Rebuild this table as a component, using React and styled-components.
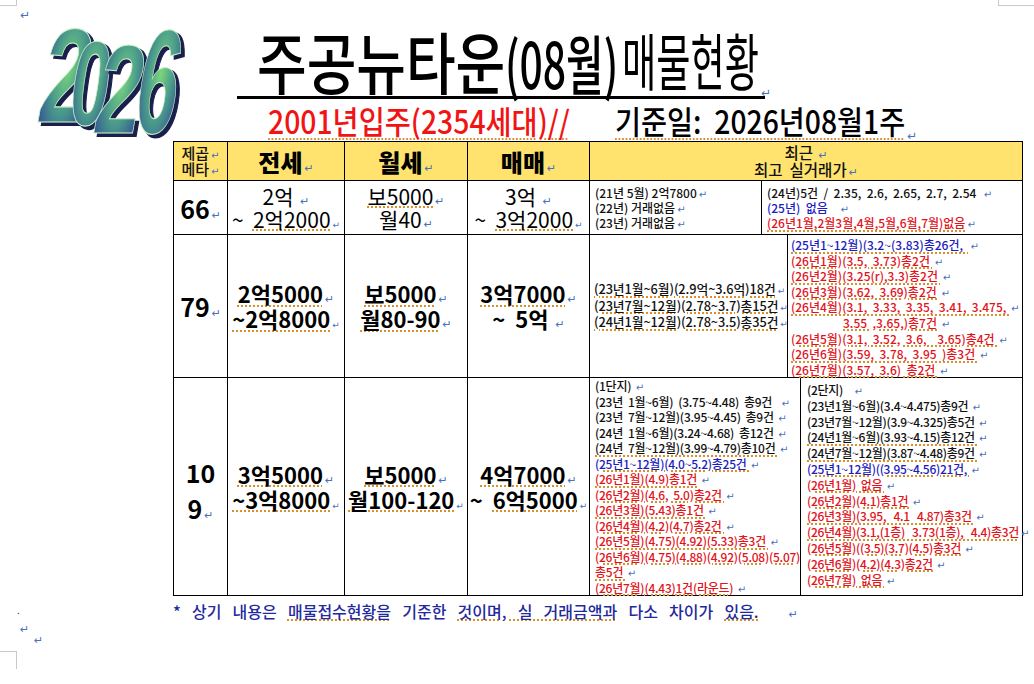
import React, { useRef, useState, useLayoutEffect } from 'react';
import styled, { createGlobalStyle } from 'styled-components';

const GlobalStyle = createGlobalStyle`
  html, body { margin: 0; padding: 0; background: #fff; }
  body { font-family: "Noto Sans CJK KR", "Noto Sans", sans-serif; color: #111; }
  * { box-sizing: border-box; }
`;

const COLORS = { k: '#111', b: '#1c1cbf', r: '#e3121b' };
const DOT = '#d98f2b';

const Page = styled.div`
  position: relative;
  width: 1034px;
  height: 684px;
  overflow: hidden;
  background: #fff;
  display: flex;
  flex-direction: column;
`;

const CropMark = styled.div`
  position: absolute;
  left: ${(p) => p.$x}px;
  top: ${(p) => p.$y}px;
  width: ${(p) => p.$w}px;
  height: ${(p) => p.$h}px;
  border: 0 solid #c9c9c9;
  border-width: ${(p) => p.$bw};
`;

const Mark = styled.span`
  font-family: "DejaVu Sans", sans-serif;
  font-size: ${(p) => p.$s || 11}px;
  line-height: 0;
  font-weight: 400;
  letter-spacing: 0;
  color: #4a70b8;
  margin-left: 2px;
`;

const TopRow = styled.div`
  height: 20px;
  padding: 6px 0 0 18px;
  line-height: 12px;
`;

/* ---------- fit-to-width text (condensed headline fonts) ---------- */
const FitBox = styled.span`
  display: inline-block;
  width: ${(p) => p.$w}px;
  white-space: pre;
  flex-shrink: 0;
  line-height: 1;
`;
const FitInner = styled.span`
  display: inline-block;
  transform-origin: 0 50%;
  ${(p) => p.$u && `text-decoration: underline dotted ${DOT}; text-underline-offset: 4px; text-decoration-thickness: 1.5px;`}
`;

function Fit({ w, u, children, className }) {
  const ref = useRef(null);
  const [s, setS] = useState(1);
  useLayoutEffect(() => {
    const measure = () => {
      const el = ref.current;
      if (!el) return;
      const n = el.offsetWidth;
      if (n) setS(w / n);
    };
    measure();
    if (document.fonts && document.fonts.ready) document.fonts.ready.then(measure);
  }, [w]);
  return (
    <FitBox $w={w} className={className}>
      <FitInner ref={ref} $u={u} style={{ transform: `scaleX(${s})` }}>
        {children}
      </FitInner>
    </FitBox>
  );
}

/* ---------- header ---------- */
const Header = styled.div`
  display: grid;
  grid-template-columns: 237px 1fr;
  height: 121px;
`;

const LogoSvg = styled.svg`
  display: block;
  margin-left: 20px;
  overflow: visible;
`;

const TitleCol = styled.div`
  display: flex;
  flex-direction: column;
`;

const TitleLine = styled.div`
  width: 528px;
  height: 79px;
  border-bottom: 3px solid #000;
  display: flex;
  align-items: flex-end;
  padding: 0 0 3px 20px;
`;

const TitleMain = styled(Fit)`
  font-size: 67px;
  font-weight: 500;
  color: #000;
`;
const TitleParen = styled(Fit)`
  font-size: 64px;
  font-weight: 500;
  color: #000;
`;
const TitleSub = styled(Fit)`
  font-size: 62px;
  font-weight: 400;
  color: #000;
  margin: 0 0 3px 4px;
`;

const SubLine = styled.div`
  height: 42px;
  display: flex;
  align-items: flex-end;
  padding: 0 0 5px 31px;
`;
const SubRed = styled(Fit)`
  font-size: 32px;
  font-weight: 500;
  color: #f01414;
`;
const SubBlack = styled(Fit)`
  font-size: 32px;
  font-weight: 500;
  color: #000;
  margin-left: 45px;
`;

/* ---------- table ---------- */
const Table = styled.div`
  margin-left: 173px;
  align-self: flex-start;
  display: grid;
  grid-template-columns: 54px 117px 123px 122px 433px;
  grid-template-rows: 39px 54px 143px 218px;
  border-top: 1px solid #000;
  border-left: 1px solid #000;
`;

const Cell = styled.div`
  border-right: 1px solid #000;
  border-bottom: 1px solid #000;
  background: ${(p) => (p.$head ? '#ffe36e' : '#fff')};
  display: flex;
  flex-direction: column;
  align-items: center;
  justify-content: center;
  text-align: center;
  white-space: pre;
  overflow: visible;
`;

const HeadSmall = styled.div`
  font-size: 15px;
  line-height: 16px;
  font-weight: 500;
  color: #111;
`;
const HeadBig = styled.div`
  font-size: 24px;
  line-height: 28px;
  font-weight: 900;
  color: #000;
  padding-top: 2px;
`;
const HeadRecent = styled.div`
  font-size: 15.5px;
  line-height: 17px;
  font-weight: 500;
  color: #111;
`;

const SizeNum = styled.div`
  font-size: 25px;
  line-height: ${(p) => p.$lh || 30}px;
  font-weight: 700;
  color: #000;
`;

const ValLine = styled.div`
  font-size: ${(p) => (p.$bold ? 22 : 21)}px;
  line-height: ${(p) => (p.$bold ? 25 : 23)}px;
  font-weight: ${(p) => (p.$bold ? 600 : 400)};
  color: #000;
`;

const Dotted = styled.span`
  text-decoration: underline dotted ${DOT};
  text-decoration-thickness: 1.5px;
  text-underline-offset: 2px;
`;

const SplitCell = styled(Cell)`
  flex-direction: row;
  align-items: stretch;
  justify-content: flex-start;
  text-align: left;
`;

const SubPanel = styled.div`
  ${(p) => (p.$w ? `width: ${p.$w}px; flex-shrink: 0; border-right: 1px solid #000;` : 'flex: 1;')}
  display: flex;
  flex-direction: column;
  justify-content: ${(p) => (p.$center ? 'center' : 'flex-start')};
  padding: ${(p) => p.$pad || '0 0 0 4px'};
  font-size: ${(p) => p.$fs}px;
  font-weight: 500;
  letter-spacing: ${(p) => p.$ls || 0}px;
  white-space: pre;
`;

const TxtLine = styled.div`
  height: ${(p) => p.$lh}px;
  line-height: ${(p) => p.$lh}px;
  color: ${(p) => COLORS[p.$c || 'k']};
  padding-left: ${(p) => p.$indent || 0}px;
`;

function Lines({ items, lh, markSize = 10 }) {
  return items.map((it, i) => (
    <TxtLine key={i} $lh={lh} $c={it.c} $indent={it.i}>
      {it.u ? <Dotted>{it.t}</Dotted> : it.t}
      {it.m !== false && <Mark $s={markSize}>↵</Mark>}
    </TxtLine>
  ));
}

/* ---------- footer ---------- */
const FooterRow = styled.div`
  display: grid;
  grid-template-columns: 173px 1fr;
  height: 21px;
  margin-top: 4px;
  align-items: center;
`;
const Dot = styled.span`
  margin-left: 17px;
  font-size: 10px;
  line-height: 10px;
  color: #333;
  align-self: start;
  padding-top: 5px;
`;
const FootText = styled.div`
  font-size: 16px;
  line-height: 18px;
  font-weight: 500;
  color: #1f2a9e;
  word-spacing: 2px;
  white-space: pre;
`;
const MarkRow = styled.div`
  height: ${(p) => p.$h}px;
  padding-left: ${(p) => p.$x}px;
  line-height: ${(p) => p.$h}px;
`;

/* ---------- data ---------- */
const r66L = [
  { t: '(21년 5월) 2억7800' },
  { t: '(22년) 거래없음' },
  { t: '(23년) 거래없음' },
];
const r66R = [
  { t: '(24년)5건  /  2.35,  2.6,  2.65,  2.7,  2.54  ' },
  { t: '(25년)  없음    ', c: 'b' },
  { t: '(26년1월,2월3월,4월,5월,6월,7월)없음', c: 'r', u: true },
];
const r79L = [
  { t: '(23년1월~6월)(2.9억~3.6억)18건', u: true },
  { t: '(23년7월~12월)(2.78~3.7)총15건', u: true },
  { t: '(24년1월~12월)(2.78~3.5)총35건', u: true },
];
const r79R = [
  { t: '(25년1~12월)(3.2~(3.83)총26건,  ', c: 'b', u: true },
  { t: '(26년1월)(3.5,  3.73)총2건 ', c: 'r', u: true },
  { t: '(26년2월)(3.25(r),3.3)총2건 ', c: 'r', u: true },
  { t: '(26년3월)(3.62,  3.69)총2건 ', c: 'r', u: true },
  { t: '(26년4월)(3.1,  3.33,  3.35,  3.41,  3.475, ', c: 'r', u: true },
  { t: '3.55  ,3.65,)총7건 ', c: 'r', u: true, i: 52 },
  { t: '(26년5월)(3.1,  3.52,  3.6,    3.65)총4건 ', c: 'r', u: true },
  { t: '(26년6월)(3.59,  3.78,  3.95  )총3건 ', c: 'r', u: true },
  { t: '(26년7월)(3.57,  3.6)  총2건 ', c: 'r', u: true },
];
const r109L = [
  { t: '(1단지) ' },
  { t: '(23년  1월~6월)  (3.75~4.48)  총9건   ' },
  { t: '(23년  7월~12월)(3.95~4.45)  총9건 ' },
  { t: '(24년  1월~6월)(3.24~4.68)  총12건 ' },
  { t: '(24년  7월~12월)(3.99~4.79)총10건 ', u: true },
  { t: '(25년1~12월)(4.0~5.2)총25건 ', c: 'b', u: true },
  { t: '(26년1월)(4.9)총1건 ', c: 'r', u: true },
  { t: '(26년2월)(4.6,  5.0)총2건 ', c: 'r', u: true },
  { t: '(26년3월)(5.43)총1건 ', c: 'r', u: true },
  { t: '(26년4월)(4.2)(4.7)총2건 ', c: 'r', u: true },
  { t: '(26년5월)(4.75)(4.92)(5.33)총3건 ', c: 'r', u: true },
  { t: '(26년6월)(4.75)(4.88)(4.92)(5.08)(5.07)', c: 'r', u: true, m: false },
  { t: '총5건 ', c: 'r', u: true },
  { t: '(26년7월)(4.43)1건(라운드) ', c: 'r', u: true },
];
const r109R = [
  { t: '(2단지)    ' },
  { t: '(23년1월~6월)(3.4~4.475)총9건 ' },
  { t: '(23년7월~12월)(3.9~4.325)총5건 ' },
  { t: '(24년1월~6월)(3.93~4.15)총12건 ', u: true },
  { t: '(24년7월~12월)(3.87~4.48)총9건 ', u: true },
  { t: '(25년1~12월)((3.95~4.56)21건, ', c: 'b', u: true },
  { t: '(26년1월)  없음 ', c: 'r', u: true },
  { t: '(26년2월)(4.1)총1건 ', c: 'r', u: true },
  { t: '(26년3월)(3.95,   4.1   4.87)총3건 ', c: 'r', u: true },
  { t: '(26년4월)(3.1,(1층)   3.73(1층),   4.4)총3건', c: 'r', u: true },
  { t: '(26년5월)((3.5)(3.7)(4.5)총3건 ', c: 'r', u: true },
  { t: '(26년6월)(4.2)(4.3)총2건 ', c: 'r', u: true },
  { t: '(26년7월)  없음 ', c: 'r', u: true },
];

/* ---------- logo ---------- */
const DIGITS = [
  { ch: '2', x: 15, y: 102, fs: 134, sx: 0.64, sk: -10 },
  { ch: '0', x: 46, y: 105, fs: 120, sx: 0.58, sk: -8 },
  { ch: '2', x: 71, y: 113, fs: 126, sx: 0.64, sk: -10 },
  { ch: '6', x: 111, y: 113, fs: 148, sx: 0.5, sk: -9 },
];

function Logo() {
  return (
    <LogoSvg width="165" height="120" viewBox="0 0 165 120">
      <defs>
        <radialGradient id="lg" cx="0.5" cy="0.45" r="0.65">
          <stop offset="0" stopColor="#79d67c" />
          <stop offset="0.45" stopColor="#4b9b8b" />
          <stop offset="1" stopColor="#2b3f96" />
        </radialGradient>
      </defs>
      {DIGITS.map((d, i) => (
        <g key={i} fontFamily="'Liberation Sans', Arial, sans-serif" fontWeight="700" fontSize={d.fs}>
          <g transform={`translate(${d.x + 3.5} ${d.y + 2.5}) skewX(${d.sk}) scale(${d.sx} 1)`}>
            <text x="0" y="0" fill="#1a1f4c" stroke="#1a1f4c" strokeWidth="2">{d.ch}</text>
          </g>
          <g transform={`translate(${d.x} ${d.y}) skewX(${d.sk}) scale(${d.sx} 1)`}>
            <text x="0" y="0" fill="url(#lg)" stroke="#c9efc6" strokeWidth="1.1">{d.ch}</text>
          </g>
        </g>
      ))}
    </LogoSvg>
  );
}

export default function App() {
  return (
    <>
      <GlobalStyle />
      <Page>
        <CropMark $x={0} $y={0} $w={17} $h={6} $bw="0 1px 1px 0" />
        <CropMark $x={998} $y={0} $w={36} $h={6} $bw="0 0 1px 1px" />
        <CropMark $x={0} $y={651} $w={17} $h={18} $bw="1px 1px 0 0" />

        <TopRow>
          <Mark $s={12}>↵</Mark>
        </TopRow>

        <Header>
          <Logo />
          <TitleCol>
            <TitleLine>
              <TitleMain w={248}>주공뉴타운</TitleMain>
              <TitleParen w={113}>(08월)</TitleParen>
              <TitleSub w={137}>매물현황</TitleSub>
              <Mark $s={12}>↵</Mark>
            </TitleLine>
            <SubLine>
              <SubRed w={302} u>2001년입주(2354세대)//</SubRed>
              <SubBlack w={290} u>기준일:  2026년08월1주</SubBlack>
              <Mark $s={12}>↵</Mark>
            </SubLine>
          </TitleCol>
        </Header>

        <Table>
          {/* header row */}
          <Cell $head>
            <HeadSmall>제곱<Mark $s={10}>↵</Mark></HeadSmall>
            <HeadSmall>메타<Mark $s={10}>↵</Mark></HeadSmall>
          </Cell>
          <Cell $head><HeadBig>전세<Mark $s={11}>↵</Mark></HeadBig></Cell>
          <Cell $head><HeadBig>월세<Mark $s={11}>↵</Mark></HeadBig></Cell>
          <Cell $head><HeadBig>매매<Mark $s={11}>↵</Mark></HeadBig></Cell>
          <Cell $head>
            <HeadRecent>최근 <Mark $s={11}>↵</Mark></HeadRecent>
            <HeadRecent>최고  실거래가<Mark $s={11}>↵</Mark></HeadRecent>
          </Cell>

          {/* 66 */}
          <Cell><SizeNum>66<Mark $s={11}>↵</Mark></SizeNum></Cell>
          <Cell>
            <ValLine>2억 <Mark>↵</Mark></ValLine>
            <ValLine>~  <Dotted>2억2000</Dotted><Mark $s={9}>↵</Mark></ValLine>
          </Cell>
          <Cell>
            <ValLine><Dotted>보5000</Dotted><Mark>↵</Mark></ValLine>
            <ValLine>월40<Mark>↵</Mark></ValLine>
          </Cell>
          <Cell>
            <ValLine>3억 <Mark>↵</Mark></ValLine>
            <ValLine>~  <Dotted>3억2000</Dotted><Mark $s={9}>↵</Mark></ValLine>
          </Cell>
          <SplitCell>
            <SubPanel $w={172} $fs={12} $pad="4px 0 0 5px">
              <Lines items={r66L} lh={15} />
            </SubPanel>
            <SubPanel $fs={12} $pad="4px 0 0 5px">
              <Lines items={r66R} lh={15} />
            </SubPanel>
          </SplitCell>

          {/* 79 */}
          <Cell><SizeNum>79<Mark $s={11}>↵</Mark></SizeNum></Cell>
          <Cell>
            <ValLine $bold><Dotted>2억5000</Dotted><Mark>↵</Mark></ValLine>
            <ValLine $bold><Dotted>~2억8000</Dotted><Mark $s={9}>↵</Mark></ValLine>
          </Cell>
          <Cell>
            <ValLine $bold><Dotted>보5000</Dotted><Mark>↵</Mark></ValLine>
            <ValLine $bold><Dotted>월80-90</Dotted><Mark>↵</Mark></ValLine>
          </Cell>
          <Cell>
            <ValLine $bold><Dotted>3억7000</Dotted><Mark>↵</Mark></ValLine>
            <ValLine $bold>~  5억 <Mark>↵</Mark></ValLine>
          </Cell>
          <SplitCell>
            <SubPanel $w={198} $fs={12.8} $ls={-0.1} $center $pad="0 0 0 4px">
              <Lines items={r79L} lh={16.5} markSize={9} />
            </SubPanel>
            <SubPanel $fs={12} $pad="2px 0 0 3px">
              <Lines items={r79R} lh={15.6} />
            </SubPanel>
          </SplitCell>

          {/* 109 */}
          <Cell>
            <SizeNum $lh={42}>10</SizeNum>
            <SizeNum $lh={30}>9<Mark $s={11}>↵</Mark></SizeNum>
          </Cell>
          <Cell>
            <ValLine $bold><Dotted>3억5000</Dotted><Mark>↵</Mark></ValLine>
            <ValLine $bold><Dotted>~3억8000</Dotted><Mark $s={9}>↵</Mark></ValLine>
          </Cell>
          <Cell>
            <ValLine $bold><Dotted>보5000</Dotted><Mark>↵</Mark></ValLine>
            <ValLine $bold><Dotted>월100-120</Dotted><Mark $s={9}>↵</Mark></ValLine>
          </Cell>
          <Cell>
            <ValLine $bold><Dotted>4억7000</Dotted><Mark>↵</Mark></ValLine>
            <ValLine $bold>~  <Dotted>6억5000</Dotted><Mark $s={9}>↵</Mark></ValLine>
          </Cell>
          <SplitCell>
            <SubPanel $w={211} $fs={12} $ls={-0.25} $pad="0 0 0 5px">
              <Lines items={r109L} lh={15.5} />
            </SubPanel>
            <SubPanel $fs={12} $ls={-0.3} $pad="4px 0 0 6px">
              <Lines items={r109R} lh={15.8} />
            </SubPanel>
          </SplitCell>
        </Table>

        <FooterRow>
          <Dot>.</Dot>
          <FootText>
            *  상기  내용은  <Dotted>매물접수현황을</Dotted>  기준한  <Dotted>것이며,  실  거래금액과</Dotted>  다소  차이가  <Dotted>있음.</Dotted>     <Mark $s={11}>↵</Mark>
          </FootText>
        </FooterRow>
        <MarkRow $h={10} $x={18}><Mark $s={11}>↵</Mark></MarkRow>
        <MarkRow $h={12} $x={32}><Mark $s={11}>↵</Mark></MarkRow>
      </Page>
    </>
  );
}
